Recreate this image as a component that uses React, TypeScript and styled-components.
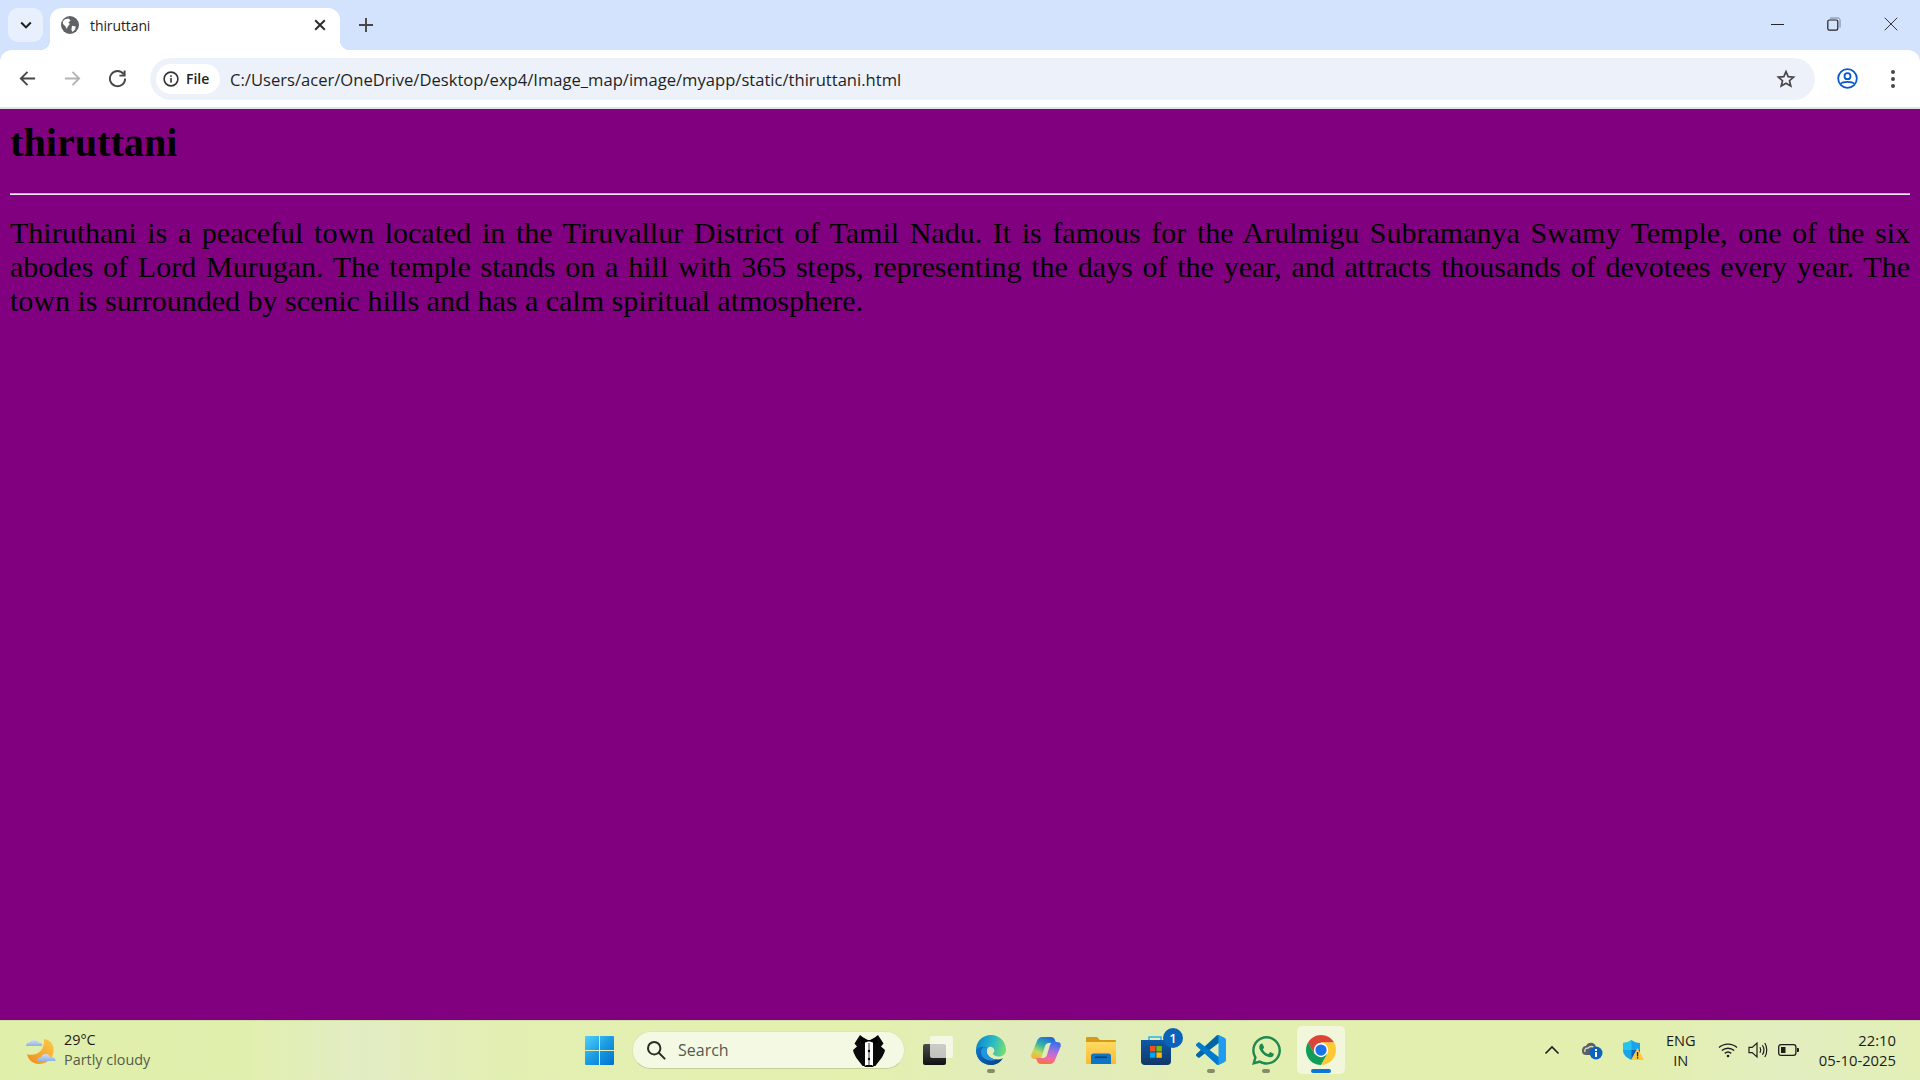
import React from "react";
import styled, { createGlobalStyle } from "styled-components";
import { FaWhatsapp } from "react-icons/fa";

const UI = `"Open Sans", "Noto Sans", "Liberation Sans", sans-serif`;
const FRAME = "#d3e3fd";

const Global = createGlobalStyle`
  html, body { margin: 0; padding: 0; height: 100%; overflow: hidden; }
  #root { height: 100%; }
`;

const Screen = styled.div`
  height: 1080px;
  display: flex;
  flex-direction: column;
  background: ${FRAME};
`;

/* ---------- tab strip ---------- */
const TabStrip = styled.div`
  height: 50px;
  flex: none;
  display: flex;
  align-items: flex-end;
  padding-left: 8px;
`;
const TabSearch = styled.button`
  width: 35px;
  height: 34px;
  margin-bottom: 8px;
  padding: 0;
  border: 0;
  border-radius: 10px;
  background: #e9f0fd;
  display: flex;
  align-items: center;
  justify-content: center;
`;
const Tab = styled.div`
  position: relative;
  width: 290px;
  height: 42px;
  margin-left: 7px;
  box-sizing: border-box;
  padding: 0 12px 8px 11px;
  background: #fff;
  border-radius: 12px 12px 0 0;
  display: flex;
  align-items: center;
  &::before, &::after {
    content: "";
    position: absolute;
    bottom: 0;
    width: 10px;
    height: 10px;
  }
  &::before { left: -10px; background: radial-gradient(circle at 0 0, transparent 10px, #fff 10.5px); }
  &::after { right: -10px; background: radial-gradient(circle at 100% 0, transparent 10px, #fff 10.5px); }
`;
const TabTitle = styled.span`
  margin-left: 11px;
  flex: 1;
  font: 400 14px ${UI};
  color: #1f1f1f;
  letter-spacing: -0.1px;
`;
const NewTab = styled.div`
  margin: 0 0 15px 16px;
  width: 20px;
  height: 20px;
`;
const WindowControls = styled.div`
  margin-left: auto;
  display: flex;
  align-items: center;
  height: 48px;
  align-self: flex-start;
  padding-right: 22px;
  gap: 43px;
  svg { display: block; }
`;

/* ---------- toolbar ---------- */
const Toolbar = styled.div`
  height: 57px;
  flex: none;
  background: #fff;
  border-radius: 12px 12px 0 0;
  display: flex;
  align-items: center;
  padding: 0 0 0 16px;
  box-sizing: border-box;
`;
const NavIcon = styled.div<{ $gap?: number }>`
  width: 22px;
  height: 22px;
  margin-right: ${(p) => p.$gap ?? 23}px;
  display: flex;
  align-items: center;
  justify-content: center;
`;
const Omnibox = styled.div`
  width: 1665px;
  height: 42px;
  margin: 0 0 0 -1px;
  border-radius: 21px;
  background: #edf2fa;
  display: flex;
  align-items: center;
  padding: 0 19px 0 6px;
  box-sizing: border-box;
`;
const SecurityChip = styled.div`
  width: 64px;
  height: 30px;
  border-radius: 15px;
  background: #fff;
  display: flex;
  align-items: center;
  padding-left: 6px;
  gap: 6px;
  box-sizing: border-box;
  font: 600 14px ${UI};
  color: #1f1f1f;
`;
const Url = styled.span`
  margin-left: 10px;
  padding-top: 1px;
  flex: 1;
  font: 400 16.6px ${UI};
  color: #1f1f1f;
`;
const ToolbarRight = styled.div`
  display: flex;
  align-items: center;
  margin-left: 22px;
  gap: 33px;
`;
const ToolbarEdge = styled.div`
  height: 2px;
  flex: none;
  background: #e1e3e6;
`;

/* ---------- page ---------- */
const Page = styled.main`
  flex: 1;
  min-height: 0;
  background: #800080;
  padding: 12px 10px 0;
  font-family: "Liberation Serif", "Times New Roman", serif;
  color: #000;
`;
const Heading = styled.h1`
  margin: 0;
  font-size: 40.2px;
  line-height: 44px;
  font-weight: 700;
`;
const Rule = styled.hr`
  margin: 28px 0 0;
  height: 0;
  border: 0;
  border-top: 1px solid #c6a4c6;
  border-bottom: 1px solid #f4eaf4;
`;
const Body = styled.p`
  margin: 21px 0 0;
  font-size: 30px;
  line-height: 34px;
  text-align: justify;
`;

/* ---------- taskbar ---------- */
const Taskbar = styled.footer`
  height: 60px;
  flex: none;
  display: flex;
  align-items: center;
  box-sizing: border-box;
  padding-bottom: 1px;
  border-top: 1px solid #cfdca2;
  background: linear-gradient(90deg, #e0efaa 0%, #e1efae 13%, #e2ecc4 19%, #e2efb2 26%, #e3f0ae 45%, #e1ebbd 54%, #e2efb0 66%, #e2efaf 86%, #e2eec0 93%, #e2efb5 100%);
`;
const Weather = styled.div`
  width: 585px;
  flex: none;
  display: flex;
  align-items: center;
  padding-left: 25px;
  box-sizing: border-box;
  gap: 8px;
`;
const WeatherText = styled.div`
  display: flex;
  flex-direction: column;
  font: 400 14.4px/20px ${UI};
  color: #1b1b1b;
  span + span { color: #555b48; }
`;
const SearchBox = styled.div`
  width: 273px;
  height: 38px;
  margin: 0 9px 0 18px;
  box-sizing: border-box;
  border-radius: 19px;
  background: #f4f9e4;
  border: 1px solid #dbe6b4;
  border-bottom-color: #c4d098;
  display: flex;
  align-items: center;
  padding: 0 19px 0 13px;
  font: 400 16px ${UI};
  color: #55594c;
  span { margin-left: 12px; flex: 1; }
`;
const AppSlot = styled.div<{ $active?: boolean; $mark?: "idle" | "active" }>`
  position: relative;
  width: 48px;
  height: 48px;
  margin-right: 7px;
  border-radius: 5px;
  display: flex;
  align-items: center;
  justify-content: center;
  background: ${(p) => (p.$active ? "#f2f7dc" : "transparent")};
  &:first-child { margin-right: 5px; }
  ${(p) =>
    p.$mark
      ? `&::after {
    content: "";
    position: absolute;
    bottom: 1px;
    left: 50%;
    transform: translateX(-50%);
    height: 4px;
    border-radius: 2px;
    width: ${p.$mark === "active" ? 20 : 8}px;
    background: ${p.$mark === "active" ? "#0a78d4" : "#858c6a"};
  }`
      : ""}
`;
const Badge = styled.div`
  position: absolute;
  top: 2px;
  right: -3px;
  width: 20px;
  height: 20px;
  border-radius: 50%;
  background: #0a63b8;
  color: #fff;
  font: 600 13px/20px ${UI};
  text-align: center;
`;
const AppRow = styled.div`
  display: flex;
  align-items: center;
`;
const Tray = styled.div`
  margin-left: auto;
  display: flex;
  align-items: center;
  padding-right: 24px;
`;
const TrayIcon = styled.div<{ $left: number }>`
  margin-left: ${(p) => p.$left}px;
  display: flex;
  align-items: center;
`;
const Lang = styled.div`
  margin-left: 21px;
  width: 32px;
  font: 400 14.6px/20px ${UI};
  color: #1b1b1b;
  text-align: center;
`;
const Clock = styled.div`
  margin-left: 20px;
  text-align: right;
  font: 400 14.8px/20px ${UI};
  color: #1b1b1b;
`;

/* ---------- drawings ---------- */
const Globe = () => (
  <svg width="18" height="18" viewBox="0 0 18 18">
    <circle cx="9" cy="9" r="9" fill="#5f6368" />
    <path d="M4 3.2 7.6 2.4 9.6 4.4 7.4 6.4 8.8 8 6.8 10.4 5.8 13 4.4 10.2 2 8 1.8 5.6Z" fill="#fff" />
    <path d="M11 9.8 14.8 10.4 14 13.4 11.4 16 10.4 13.4Z" fill="#fff" />
  </svg>
);
const Stroke = ({ size = 20, d, color = "#474747", w = 2 }: { size?: number; d: string; color?: string; w?: number }) => (
  <svg width={size} height={size} viewBox="0 0 20 20" fill="none" stroke={color} strokeWidth={w}>
    <path d={d} />
  </svg>
);
const InfoIcon = () => (
  <svg width="18" height="18" viewBox="0 0 18 18" fill="none">
    <circle cx="9" cy="9" r="6.9" stroke="#333" strokeWidth="1.6" />
    <rect x="8.2" y="8" width="1.6" height="4.6" fill="#333" />
    <rect x="8.2" y="5.3" width="1.6" height="1.6" fill="#333" />
  </svg>
);
const StarIcon = () => (
  <svg width="20" height="20" viewBox="0 0 20 20" fill="none" stroke="#474747" strokeWidth="1.7" strokeLinejoin="miter">
    <path d="M10 2.6 12.2 7.6 17.6 8.1 13.5 11.7 14.8 17 10 14.2 5.2 17 6.5 11.7 2.4 8.1 7.8 7.6Z" />
  </svg>
);
const ProfileIcon = () => (
  <svg width="21" height="21" viewBox="0 0 21 21" fill="none" stroke="#0b57d0" strokeWidth="1.8">
    <circle cx="10.5" cy="10.5" r="9.3" />
    <circle cx="10.5" cy="8.2" r="3" />
    <path d="M3.8 15.6C6 13.2 15 13.2 17.2 15.6" />
  </svg>
);
const Kebab = () => (
  <svg width="4" height="18" viewBox="0 0 4 18" fill="#474747">
    <circle cx="2" cy="2" r="2" />
    <circle cx="2" cy="9" r="2" />
    <circle cx="2" cy="16" r="2" />
  </svg>
);
const RestoreIcon = () => (
  <svg width="14" height="14" viewBox="0 0 14 14" fill="none" stroke="#202020" strokeWidth="1">
    <rect x="0.8" y="3" width="10" height="10.2" rx="1.6" strokeWidth="1.2" />
    <path d="M3.2 1H10.8C12.2 1 13 1.8 13 3.2V10.6" stroke="#77808c" />
  </svg>
);
const WeatherIcon = () => (
  <svg width="31" height="31" viewBox="0 0 31 31">
    <defs>
      <linearGradient id="moon" x1="1" y1="0" x2="0" y2="1">
        <stop offset="0" stopColor="#fbcb4b" />
        <stop offset="1" stopColor="#f08a1e" />
      </linearGradient>
      <linearGradient id="cloudg" x1="0" y1="0" x2="0" y2="1">
        <stop offset="0" stopColor="#cfdef8" />
        <stop offset="1" stopColor="#8fb2e6" />
      </linearGradient>
    </defs>
    <path d="M19 4C27 5 30 12 28 19 26 27 16 31 9 28 5 26.5 3 23 2 19 10 22 20 17 19 4Z" fill="url(#moon)" />
    <path d="M1 11C1 8 3 8 4.5 7.5 6 4 12 4 13.5 7.5 16 7.5 17.5 9 17 11Z" fill="url(#cloudg)" />
    <path d="M13 26C12.5 23 14 22.5 16 22 17.5 18 24 18 25.5 22 29 22 31 24 30.5 26Z" fill="url(#cloudg)" />
  </svg>
);
const StartIcon = () => (
  <svg width="29" height="29" viewBox="0 0 29 29">
    <defs>
      <linearGradient id="win" x1="0" y1="0" x2="1" y2="1">
        <stop offset="0" stopColor="#50d0fb" />
        <stop offset="0.5" stopColor="#1a9be3" />
        <stop offset="1" stopColor="#0070cf" />
      </linearGradient>
    </defs>
    <path d="M1 0H14V14H0V1Q0 0 1 0ZM15 0H28Q29 0 29 1V14H15ZM0 15H14V29H1Q0 29 0 28ZM15 15H29V28Q29 29 28 29H15Z" fill="url(#win)" />
  </svg>
);
const SearchGlyph = () => (
  <svg width="20" height="20" viewBox="0 0 20 20" fill="none" stroke="#2a2c25" strokeWidth="2">
    <circle cx="8.2" cy="8.2" r="6.2" />
    <path d="M12.8 12.8 18.6 18.6" strokeLinecap="round" />
  </svg>
);
const Tuxedo = () => (
  <svg width="32" height="33" viewBox="0 0 32 33">
    <path d="M7 1 L12 5 L12 32 L9.5 32 C6 27 1 22 0 16 L4 12.5 L1.5 9.5 Z" fill="#0a0a0a" />
    <path d="M25 1 L20 5 L20 32 L22.5 32 C26 27 31 22 32 16 L28 12.5 L30.5 9.5 Z" fill="#0a0a0a" />
    <rect x="12" y="7" width="8" height="26" fill="#fff" />
    <rect x="15" y="9" width="2" height="24" fill="#9a9a9a" />
    <path d="M8 2.5 L15 6 H17 L24 2.5 L24 10 L17 7.6 H15 L8 10Z" fill="#000" />
    <circle cx="16" cy="17" r="1.2" fill="#000" />
    <circle cx="16" cy="25" r="1.2" fill="#000" />
    <path d="M11 33 L13 31 H19 L21 33Z" fill="#0a0a0a" />
  </svg>
);
const TaskView = () => (
  <svg width="30" height="29" viewBox="0 0 30 29">
    <defs>
      <linearGradient id="tvd" x1="0" y1="0" x2="0" y2="1">
        <stop offset="0" stopColor="#4c4c4c" />
        <stop offset="1" stopColor="#111" />
      </linearGradient>
    </defs>
    <rect x="0" y="8" width="23" height="21" rx="2" fill="url(#tvd)" />
    <rect x="7" y="0" width="23" height="22" rx="2" fill="#f8f9f4" fillOpacity="0.74" />
  </svg>
);
const Edge = () => (
  <svg width="30" height="30" viewBox="0 0 30 30">
    <defs>
      <linearGradient id="edgeA" x1="0" y1="0.3" x2="1" y2="0.6">
        <stop offset="0" stopColor="#0c86d0" />
        <stop offset="0.5" stopColor="#2ab9c4" />
        <stop offset="1" stopColor="#7fe06c" />
      </linearGradient>
      <linearGradient id="edgeB" x1="0" y1="0" x2="1" y2="1">
        <stop offset="0" stopColor="#1177c8" />
        <stop offset="1" stopColor="#0a3f84" />
      </linearGradient>
    </defs>
    <path d="M15 0C24 0 30 7 30 15 30 19 27 21.5 23 21.5 20 21.5 17 20 16.8 18.5 19 17.5 19 13 15.5 12 12.5 11.2 10 13.5 10.5 17 11.3 21.5 16 24.5 21 24.5 23.5 24.5 25.5 24 27 23 24.5 27.5 20 30 15 30 6.5 30 0 23.5 0 15 0 6.5 6.5 0 15 0Z" fill="url(#edgeA)" />
    <path d="M0 15C0 23.5 6.5 30 15 30 20 30 24.5 27.5 27 23 25.5 24 23.5 24.5 21 24.5 16 24.5 11.3 21.5 10.5 17 10.2 14.8 11 13.2 12 12.4 7.5 11.5 2 11 0 15Z" fill="url(#edgeB)" />
    <path d="M5 17C5 12.5 8.5 11.6 12 12.4 11 13.2 10.2 14.8 10.5 17 11.3 21.5 16 24.5 21 24.5 15 27 5 25 5 17Z" fill="#1f96e0" />
  </svg>
);
const Copilot = () => (
  <svg width="30" height="27" viewBox="0 0 30 27">
    <defs>
      <linearGradient id="copA" x1="0.7" y1="0" x2="0.2" y2="1">
        <stop offset="0" stopColor="#2367e0" />
        <stop offset="0.4" stopColor="#2fb4a8" />
        <stop offset="0.72" stopColor="#c5dc58" />
        <stop offset="1" stopColor="#f5b13a" />
      </linearGradient>
      <linearGradient id="copB" x1="0.6" y1="0" x2="0.4" y2="1">
        <stop offset="0" stopColor="#3b6fe6" />
        <stop offset="0.4" stopColor="#a46fe6" />
        <stop offset="0.72" stopColor="#ee6aa8" />
        <stop offset="1" stopColor="#f6753c" />
      </linearGradient>
    </defs>
    <path d="M11 0H20Q23 0 24 3L25 6H18Q15 6 14 9L11 19Q10 22 7 22H4Q-1 22 .5 17L6 4Q7.5 0 11 0Z" fill="url(#copA)" />
    <path d="M19 27H10Q7 27 6 24L5 21H12Q15 21 16 18L19 8Q20 5 23 5H26Q31 5 29.5 10L24 23Q22.5 27 19 27Z" fill="url(#copB)" />
  </svg>
);
const Explorer = () => (
  <svg width="30" height="27" viewBox="0 0 30 27">
    <defs>
      <linearGradient id="fold" x1="0" y1="0" x2="0" y2="1">
        <stop offset="0" stopColor="#ffda62" />
        <stop offset="1" stopColor="#f8b935" />
      </linearGradient>
    </defs>
    <path d="M1 0H11L14 3H29Q30 3 30 4V8H0V1Q0 0 1 0Z" fill="#d49a18" />
    <path d="M0 5H30V26Q30 27 29 27H1Q0 27 0 26Z" fill="url(#fold)" />
    <path d="M5 27V19Q5 16.5 7.5 16.5H22.5Q25 16.5 25 19V27Z" fill="#0f74c4" />
    <rect x="9" y="19.5" width="12" height="1.6" fill="#083f77" />
  </svg>
);
const Store = () => (
  <svg width="30" height="30" viewBox="0 0 30 30">
    <defs>
      <linearGradient id="bag" x1="0" y1="0" x2="0" y2="1">
        <stop offset="0" stopColor="#0d5aa8" />
        <stop offset="1" stopColor="#123765" />
      </linearGradient>
    </defs>
    <path d="M8 5V2H20V5" fill="none" stroke="#34b2ee" strokeWidth="1.6" />
    <path d="M0 5H30V26Q30 30 26 30H4Q0 30 0 26Z" fill="url(#bag)" />
    <rect x="9" y="11" width="5.4" height="5.4" fill="#f25022" />
    <rect x="15.4" y="11" width="5.4" height="5.4" fill="#7fba00" />
    <rect x="9" y="17.4" width="5.4" height="5.4" fill="#00a4ef" />
    <rect x="15.4" y="17.4" width="5.4" height="5.4" fill="#ffb900" />
  </svg>
);
const VSCode = () => (
  <svg width="30" height="30" viewBox="0 0 100 100">
    <path d="M96.4614 10.7962L75.8569 0.875542C73.4719 -0.272773 70.6217 0.211611 68.75 2.08333L1.29858 63.5832C-0.515693 65.2373 -0.513607 68.0937 1.30308 69.7452L6.81272 74.754C8.29793 76.1042 10.5347 76.2036 12.1338 74.9905L93.3609 13.3699C96.086 11.3026 100 13.2462 100 16.6667V16.4275C100 14.0265 98.6246 11.8378 96.4614 10.7962Z" fill="#0065A9" />
    <path d="M96.4614 89.2038L75.8569 99.1245C73.4719 100.273 70.6217 99.7884 68.75 97.9167L1.29858 36.4168C-0.515693 34.7627 -0.513607 31.9063 1.30308 30.2548L6.81272 25.246C8.29793 23.8958 10.5347 23.7964 12.1338 25.0095L93.3609 86.6301C96.086 88.6974 100 86.7538 100 83.3333V83.5725C100 85.9735 98.6246 88.1622 96.4614 89.2038Z" fill="#007ACC" />
    <path d="M75.8578 99.1263C73.4721 100.274 70.6219 99.7885 68.75 97.9166C71.0564 100.223 75 98.5895 75 95.3278V4.67213C75 1.41039 71.0564 -0.223106 68.75 2.08329C70.6219 0.211402 73.4721 -0.273666 75.8578 0.873633L96.4587 10.7807C98.6234 11.8217 100 14.0112 100 16.4132V83.5871C100 85.9891 98.6234 88.1786 96.4586 89.2196L75.8578 99.1263Z" fill="#1F9CF0" />
  </svg>
);
const ChromeLogo = () => (
  <svg width="30" height="30" viewBox="0 0 48 48">
    <path d="M24 0C15 0 7.2 5 3.2 12.3L13.6 30 24 12H45C41 4.9 33.1 0 24 0Z" fill="#db4437" />
    <path d="M3.2 12C-1 19.3-1 28.7 3.2 36 7.4 43.3 15 48 24 48L34.4 30H13.6Z" fill="#0f9d58" />
    <path d="M45 12H24L34.4 30 24 48C37.3 48 48 37.3 48 24 48 19.6 46.9 15.5 45 12Z" fill="#fcc934" />
    <circle cx="24" cy="24" r="11.5" fill="#fff" />
    <circle cx="24" cy="24" r="9" fill="#1a73e8" />
  </svg>
);
const Caret = () => (
  <svg width="16" height="10" viewBox="0 0 16 10" fill="none" stroke="#1d1d1d" strokeWidth="1.6">
    <path d="M1.5 8.5 8 2 14.5 8.5" />
  </svg>
);
const CloudInfo = () => (
  <svg width="22" height="20" viewBox="0 0 22 20">
    <path d="M1 11C1 7 3 6 5 6 7 1 15 2 15 8 17 8 18 9 18 11 18 14 16 15 14 15H5C3 15 1 14 1 11Z" fill="#5c6064" />
    <path d="M4 12C3 9 5 8 7 8 9 6 12 6 13 8" fill="none" stroke="#d7dcd0" strokeWidth="1.4" />
    <circle cx="15" cy="13" r="6.5" fill="#0a63c0" />
    <rect x="14" y="12" width="2" height="5" fill="#fff" />
    <rect x="14" y="9" width="2" height="2" fill="#fff" />
  </svg>
);
const Defender = () => (
  <svg width="22" height="22" viewBox="0 0 22 22">
    <path d="M9.5 1C12 3 15 4 18 4V11C18 16 14 19 9.5 21 5 19 1 16 1 11V4C4 4 7 3 9.5 1Z" fill="#1aa3e8" />
    <path d="M9.5 1V11H1V4C4 4 7 3 9.5 1Z" fill="#27c4f0" />
    <path d="M9.5 11H18C18 16 14 19 9.5 21Z" fill="#0c62b8" />
    <path d="M15.5 9 22 21H9Z" fill="#ffc83d" />
    <rect x="14.9" y="13" width="1.3" height="4.4" fill="#222" />
    <rect x="14.9" y="18.2" width="1.3" height="1.4" fill="#222" />
  </svg>
);
const Wifi = () => (
  <svg width="20" height="16" viewBox="0 0 20 16" fill="none" stroke="#1d1d1d" strokeWidth="1.4">
    <path d="M1 5.6C6 1 14 1 19 5.6" />
    <path d="M3.8 8.6C7.4 5.4 12.6 5.4 16.2 8.6" />
    <path d="M6.8 11.4C8.6 9.9 11.4 9.9 13.2 11.4" />
    <circle cx="10" cy="14" r="1.3" fill="#1d1d1d" stroke="none" />
  </svg>
);
const Volume = () => (
  <svg width="20" height="18" viewBox="0 0 20 18" fill="none" stroke="#1d1d1d" strokeWidth="1.2">
    <path d="M1 6.4H4.2L9 2V16L4.2 11.6H1Z" />
    <path d="M12 6.2C13 8 13 10 12 11.8" />
    <path d="M14.4 4.2C16.2 7 16.2 11 14.4 13.8" />
    <path d="M16.8 2C19.4 6 19.4 12 16.8 16" />
  </svg>
);
const Battery = () => (
  <svg width="21" height="12" viewBox="0 0 21 12" fill="none">
    <rect x="0.7" y="0.7" width="17.2" height="10.6" rx="2.4" stroke="#1d1d1d" strokeWidth="1.3" />
    <rect x="3" y="3" width="4.5" height="6" fill="#1d1d1d" />
    <path d="M19 4H20Q21 4 21 5V7Q21 8 20 8H19Z" fill="#1d1d1d" />
  </svg>
);

export default function App() {
  return (
    <Screen>
      <Global />
      <TabStrip>
        <TabSearch aria-label="Search tabs">
          <Stroke size={16} d="M4 7 10 13 16 7" color="#1f1f1f" w={2.6} />
        </TabSearch>
        <Tab>
          <Globe />
          <TabTitle>thiruttani</TabTitle>
          <Stroke size={16} d="M4 4 16 16M16 4 4 16" color="#2a2a2a" w={2.4} />
        </Tab>
        <NewTab>
          <Stroke d="M10 3V17M3 10H17" w={1.9} />
        </NewTab>
        <WindowControls>
          <Stroke size={13} d="M0 10H20" color="#202020" w={1.5} />
          <RestoreIcon />
          <Stroke size={14} d="M1 1 19 19M19 1 1 19" color="#303030" w={1.4} />
        </WindowControls>
      </TabStrip>
      <Toolbar>
        <NavIcon>
          <Stroke size={19} d="M18 10H3M10 3 3 10 10 17" w={2} />
        </NavIcon>
        <NavIcon>
          <Stroke size={19} d="M2 10H17M10 3 17 10 10 17" color="#b1b3b5" w={2} />
        </NavIcon>
        <NavIcon $gap={23}>
          <Stroke size={19} d="M16.5 5.5A8 8 0 1 0 18 10M17.5 1.5V7H12" w={2} />
        </NavIcon>
        <Omnibox>
          <SecurityChip>
            <InfoIcon />
            File
          </SecurityChip>
          <Url>C:/Users/acer/OneDrive/Desktop/exp4/Image_map/image/myapp/static/thiruttani.html</Url>
          <StarIcon />
        </Omnibox>
        <ToolbarRight>
          <ProfileIcon />
          <Kebab />
        </ToolbarRight>
      </Toolbar>
      <ToolbarEdge />
      <Page>
        <Heading>thiruttani</Heading>
        <Rule />
        <Body>
          Thiruthani is a peaceful town located in the Tiruvallur District of Tamil Nadu. It is famous for the Arulmigu
          Subramanya Swamy Temple, one of the six abodes of Lord Murugan. The temple stands on a hill with 365 steps,
          representing the days of the year, and attracts thousands of devotees every year. The town is surrounded by
          scenic hills and has a calm spiritual atmosphere.
        </Body>
      </Page>
      <Taskbar>
        <Weather>
          <WeatherIcon />
          <WeatherText>
            <span>29°C</span>
            <span>Partly cloudy</span>
          </WeatherText>
        </Weather>
        <StartIcon />
        <SearchBox>
          <SearchGlyph />
          <span>Search</span>
          <Tuxedo />
        </SearchBox>
        <AppRow>
          <AppSlot><TaskView /></AppSlot>
          <AppSlot $mark="idle"><Edge /></AppSlot>
          <AppSlot><Copilot /></AppSlot>
          <AppSlot><Explorer /></AppSlot>
          <AppSlot>
            <Store />
            <Badge>1</Badge>
          </AppSlot>
          <AppSlot $mark="idle"><VSCode /></AppSlot>
          <AppSlot $mark="idle"><FaWhatsapp size={33} color="#1f8a50" /></AppSlot>
          <AppSlot $active $mark="active"><ChromeLogo /></AppSlot>
        </AppRow>
        <Tray>
          <Caret />
          <TrayIcon $left={21}><CloudInfo /></TrayIcon>
          <TrayIcon $left={19}><Defender /></TrayIcon>
          <Lang>
            ENG
            <br />
            IN
          </Lang>
          <TrayIcon $left={21}><Wifi /></TrayIcon>
          <TrayIcon $left={10}><Volume /></TrayIcon>
          <TrayIcon $left={10}><Battery /></TrayIcon>
          <Clock>
            22:10
            <br />
            05-10-2025
          </Clock>
        </Tray>
      </Taskbar>
    </Screen>
  );
}
